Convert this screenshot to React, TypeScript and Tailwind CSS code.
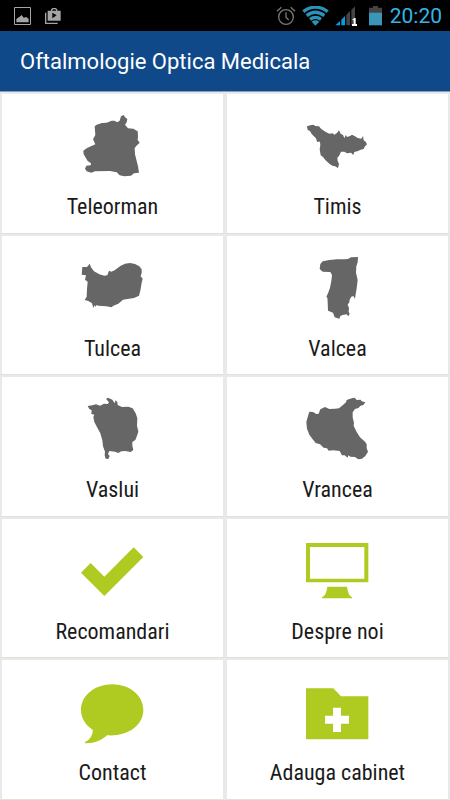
import type { ReactNode } from 'react';

type Tile = { label: string; viewBox: string; art: ReactNode };

const tiles: Tile[] = [
  {
    label: 'Teleorman',
    viewBox: '0 0 255 240',
    art: <path d="M74 61 80 56 96 51 110 50 125 44 133 44 142 49 149 44 153 31 161 27 165 34 172 39 170 49 165 56 174 67 190 68 203 76 204 89 203 102 209 110 198 121 194 127 195 145 200 165 204 181 207 200 192 202 183 209 163 211 149 208 140 199 120 195 75 196 64 200 50 196 45 188 49 179 62 178 63 172 53 165 41 145 40 134 51 126 66 119 76 115 69 100 76 87Z" />,
  },
  {
    label: 'Timis',
    viewBox: '0 0 255 240',
    art: <path d="M36 61 46 58 55 56 61 60 72 61 78 68 91 77 103 83 113 82 118 86 126 81 132 73 137 83 144 87 148 97 152 87 156 93 165 90 171 86 180 91 188 96 199 98 204 90 206 103 212 107 216 115 209 122 206 129 197 131 189 135 178 138 175 147 168 140 156 142 148 137 138 137 132 150 127 155 128 165 132 174 129 186 120 181 112 179 103 173 91 162 84 153 77 148 74 130 76 118 75 107 66 107 63 97 50 84 45 75 38 72Z" />,
  },
  {
    label: 'Tulcea',
    viewBox: '0 -10 255 240',
    art: <path d="M37 47 51 47 54 43 59 37 63 48 72 60 88 69 103 73 112 72 117 58 124 61 134 57 151 44 165 37 180 35 195 38 208 45 215 54 215 65 212 75 218 82 215 94 211 118 207 133 192 140 177 142 159 145 145 157 130 163 125 168 109 165 85 163 80 161 77 166 73 162 70 171 66 156 55 149 44 146 50 136 51 113 53 91 45 85 48 72 35 70Z" />,
  },
  {
    label: 'Valcea',
    viewBox: '0 5 255 240',
    art: <path d="M83 45 103 41 127 39 148 39 159 38 168 33 189 32 188 48 184 60 183 79 188 101 185 126 182 144 180 157 175 149 169 151 164 160 163 168 158 175 162 185 161 196 164 202 160 210 155 204 143 206 136 209 133 217 119 213 114 199 99 193 98 166 97 154 94 151 99 141 105 124 109 104 111 86 106 77 83 76 74 68 76 53Z" />,
  },
  {
    label: 'Vaslui',
    viewBox: '0 2 255 240',
    art: <path d="M53 53 67 51 78 48 90 52 102 46 113 47 117 42 108 32 114 28 127 34 134 45 137 36 142 41 143 50 156 56 175 55 188 60 197 75 202 90 201 112 205 130 201 142 196 155 187 161 187 172 190 185 182 191 166 188 154 189 145 194 135 190 118 188 114 197 119 203 115 212 107 211 104 201 105 190 99 174 97 156 91 135 82 118 73 101 70 86 73 79 64 77 65 66 58 62Z" />,
  },
  {
    label: 'Vrancea',
    viewBox: '0 2 255 240',
    art: <path d="M43 70 54 71 64 77 71 76 76 63 90 56 103 62 120 61 132 60 143 51 153 42 155 35 170 30 179 28 185 35 197 34 200 39 211 42 205 50 197 52 190 59 180 62 173 72 173 87 177 104 176 112 185 131 195 147 210 160 215 167 215 180 219 190 211 203 201 211 190 213 180 206 166 205 160 201 158 208 149 201 141 201 134 188 114 186 101 187 96 180 86 178 75 168 62 164 53 153 43 139 36 121 34 101 39 83Z" />,
  },
  {
    label: 'Recomandari',
    viewBox: '210 91 255 240',
    art: <path fill="#afca20" d="M243 216 272 187 313 228 401 140 430 169 313 286Z" />,
  },
  {
    label: 'Despre noi',
    viewBox: '210 91 255 240',
    art: (
      <path
        fill="#afca20"
        fillRule="evenodd"
        d="M243 127H430V245H243ZM255 139V234H418V139ZM307 258H366Q369 284 381 290V293H291V290Q304 284 307 258Z"
      />
    ),
  },
  {
    label: 'Contact',
    viewBox: '210 65 255 240',
    art: (
      <path
        fill="#afca20"
        d="M337 102C389 102 430 136 430 179C430 226 382 259 321 255C305 270 282 280 255 279V275C271 267 280 251 278 238C256 224 243 203 243 179C243 136 285 102 337 102Z"
      />
    ),
  },
  {
    label: 'Adauga cabinet',
    viewBox: '210 65 255 240',
    art: (
      <path
        fill="#afca20"
        fillRule="evenodd"
        d="M243 114H325L348 138H430V267H243ZM324 172V196H300V220H324V245H348V220H372V196H348V172Z"
      />
    ),
  },
];

function StatusBar() {
  return (
    <div className="flex h-[31px] items-center justify-between bg-black pr-2 pl-3.5">
      <div className="flex items-center gap-3.5">
        <svg className="h-[18px] w-[17px]" viewBox="0 0 51 54" aria-hidden="true">
          <path d="M1.5 1.5H49.5V52.5H1.5Z" fill="none" stroke="#a5a5a5" strokeWidth="3" />
          <path d="M7 46V36L12 32 17 29 23 24 29 32 37 30 44 36V46Z" fill="#a5a5a5" />
        </svg>
        <svg className="h-4 w-4" viewBox="0 0 48 48" aria-hidden="true">
          <path d="M2 14V46H38" fill="none" stroke="#a5a5a5" strokeWidth="4" />
          <path d="M20 9V5L23 2H32L35 5V9" fill="none" stroke="#a5a5a5" strokeWidth="4" />
          <path fillRule="evenodd" d="M8 8H47V38H8ZM22 14V31L35 22Z" fill="#a5a5a5" />
        </svg>
      </div>
      <div className="flex items-center">
        <svg className="h-5 w-5" viewBox="0 0 60 60" fill="none" stroke="#777" strokeWidth="4" aria-hidden="true">
          <circle cx="30" cy="33" r="22" />
          <path d="M30 19V34L38 42M3 16 16 4M44 4 57 16" />
        </svg>
        <svg className="ml-1.5 h-5 w-[27px]" viewBox="0 0 81 60" fill="none" stroke="#2d92b9" strokeWidth="10" aria-hidden="true">
          <path d="M4 17Q40-10 77 17M14 29Q40 9 67 29M24 40Q40 28 57 40" />
          <path d="M29 47Q40 39 52 47L40 59Z" fill="#2d92b9" stroke="none" />
        </svg>
        <svg className="ml-1.5 h-5 w-[22px]" viewBox="0 0 66 60" aria-hidden="true">
          <path d="M1 58 15 45V58ZM19 41 30 30V58H19Z" fill="#0a9be8" />
          <path d="M34 26 45 15V58H34ZM49 12 60 1V58H49Z" fill="#444" />
          <path d="M51 42 58 36H62V54H66V60H51V54H56V43Z" fill="#fff" />
        </svg>
        <svg className="ml-3 h-5 w-[13px]" viewBox="0 0 39 60" aria-hidden="true">
          <path d="M0 5H12V0H27V5H39V22H0Z" fill="#444" />
          <path d="M0 20H39V58H0Z" fill="#3a96b8" />
        </svg>
        <span className="ml-2 pt-0.5 text-[21px] leading-none text-[#33b5e5]">20:20</span>
      </div>
    </div>
  );
}

export default function App() {
  return (
    <div className="flex min-h-screen flex-col bg-white font-[Roboto,sans-serif]">
      <StatusBar />
      <header className="flex h-[61px] items-center border-b border-[#8d9cb0] bg-[#10498a] px-5 pt-0.5">
        <h1 className="text-[22px] leading-7 whitespace-nowrap text-white">Oftalmologie Optica Medicala</h1>
      </header>
      <main className="grid flex-1 auto-rows-fr grid-cols-2">
        {tiles.map((tile) => (
          <button
            key={tile.label}
            type="button"
            className="flex flex-col items-center border-x-2 border-t-2 border-b border-x-[#e9e9e9] border-t-[#e9e9e9] border-b-[#e6dfd5] bg-white pt-3 text-[#1a1a1a]"
          >
            <svg className="h-20 w-[85px] shrink-0" viewBox={tile.viewBox} fill="#666" aria-hidden="true">
              {tile.art}
            </svg>
            <span className="mt-[7px] font-['Roboto_Condensed','Liberation_Sans_Narrow',Roboto,sans-serif] text-[22px] leading-7">
              {tile.label}
            </span>
          </button>
        ))}
      </main>
    </div>
  );
}
